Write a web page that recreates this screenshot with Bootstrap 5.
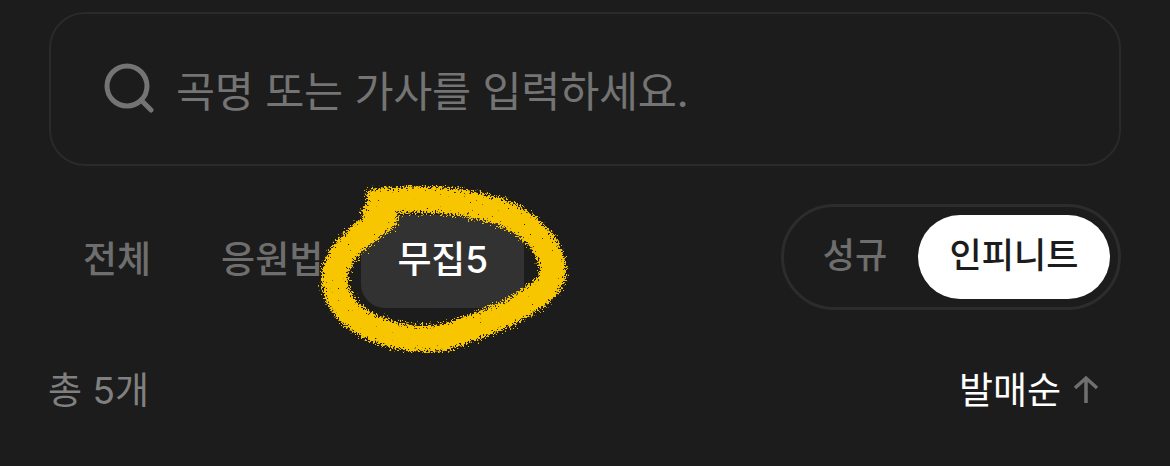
<!DOCTYPE html>
<html lang="ko">
<head>
<meta charset="utf-8">
<title>검색</title>
<link rel="stylesheet" href="https://cdn.jsdelivr.net/npm/bootstrap@5.3.0/dist/css/bootstrap.min.css">
<style>
html,body{height:466px;overflow:hidden}
body{background:#1c1c1c;font-family:Inter,"Noto Sans CJK KR",sans-serif;color:#fff}
.screen{position:relative;height:466px;padding:12px 49px 0}
.search-box{height:154px;border:2px solid #2a2a2a;border-radius:36px;padding:0 0 0 51px;gap:22px;background:#1c1c1c}
.search-box svg{flex:none}
.search-input{background:transparent;border:0;outline:0;padding:4px 0 0;box-shadow:none;font-size:42.5px;line-height:1.2;letter-spacing:-.3px;color:#fff;font-weight:400}
.search-input::placeholder{color:#747474;opacity:1}
.search-input:focus{background:transparent;box-shadow:none;color:#fff}
.filter-row{margin-top:38px;height:106px}
.tab-item{height:93px;margin-top:11px;font-size:37px;font-weight:500;color:#6e6e6e;border:0;background:none;line-height:1;white-space:nowrap;border-radius:24px}
.tab-item.first{padding:0 35px 5px 34px}
.tab-item.second{padding:0 38px 5px 35px}
.tab-item.current{background:#323232;color:#fff;width:163px;padding:0 0 5px;letter-spacing:-.2px}
.toggle-wrap{width:340px;height:106px;border:3px solid #2c2c2c;border-radius:53px;padding:8px}
.toggle-btn{flex:none;border:0;background:none;color:#6e6e6e;font-size:35px;font-weight:500;height:84px;border-radius:42px;line-height:1;padding:0 0 3px;white-space:nowrap}
.toggle-off{width:126px}
.toggle-on{width:192px;background:#fff;color:#1c1c1c}
.meta-row{margin-top:45px;height:70px}
.count{font-size:37px;color:#808080;line-height:1;margin-left:-1px}
.sort{font-size:37px;color:#fff;line-height:1;gap:12px;padding-right:22px}
.scribble{position:absolute;left:0;top:0;pointer-events:none}
</style>
</head>
<body>
<main class="screen">
  <div class="search-box d-flex align-items-center">
    <svg width="52" height="52" viewBox="0 0 52 52" fill="none" stroke="#747474" stroke-width="5" stroke-linecap="round" aria-hidden="true"><circle cx="25" cy="23" r="20"/><path d="M39 37l10 10"/></svg>
    <input class="form-control search-input" type="text" placeholder="곡명 또는 가사를 입력하세요." aria-label="검색">
  </div>
  <div class="filter-row d-flex justify-content-between align-items-start">
    <div class="d-flex align-items-start">
      <button class="tab-item first" type="button">전체</button>
      <button class="tab-item second" type="button">응원법</button>
      <button class="tab-item current" type="button">무집5</button>
    </div>
    <div class="toggle-wrap d-flex align-items-center justify-content-between">
      <button class="toggle-btn toggle-off" type="button">성규</button>
      <button class="toggle-btn toggle-on" type="button">인피니트</button>
    </div>
  </div>
  <div class="meta-row d-flex justify-content-between align-items-center">
    <span class="count">총 5개</span>
    <span class="sort d-flex align-items-center">발매순
      <svg width="26" height="30" viewBox="0 0 26 30" fill="none" stroke="#707070" stroke-width="3.5" aria-hidden="true"><path d="M13 28V3M2 13L13 3l11 10"/></svg>
    </span>
  </div>
  <svg class="scribble" width="1170" height="466" viewBox="0 0 1170 466" aria-hidden="true">
    <defs>
      <filter id="rough" x="-10%" y="-10%" width="120%" height="120%">
        <feTurbulence type="fractalNoise" baseFrequency="0.6" numOctaves="3" seed="7" result="n"/>
        <feDisplacementMap in="SourceGraphic" in2="n" scale="15" xChannelSelector="R" yChannelSelector="G" result="d"/>
        <feTurbulence type="fractalNoise" baseFrequency="0.5" numOctaves="2" seed="12" result="h"/>
        <feColorMatrix in="h" type="matrix" values="0 0 0 0 0  0 0 0 0 0  0 0 0 0 0  0 0 0 14 -10.4" result="holes"/>
        <feComposite in="d" in2="holes" operator="out"/>
      </filter>
    </defs>
    <path filter="url(#rough)" fill="none" stroke="#f7c600" stroke-width="26" stroke-linecap="butt" stroke-linejoin="round"
      d="M368 203C410 197 455 198 497 211C530 222 550 245 553 268C555 288 530 300 510 312C490 322 465 330 445 337C415 343 385 335 362 322C345 312 333 295 335 275C337 252 360 235 385 218L368 203"/>
  </svg>
</main>
</body>
</html>
